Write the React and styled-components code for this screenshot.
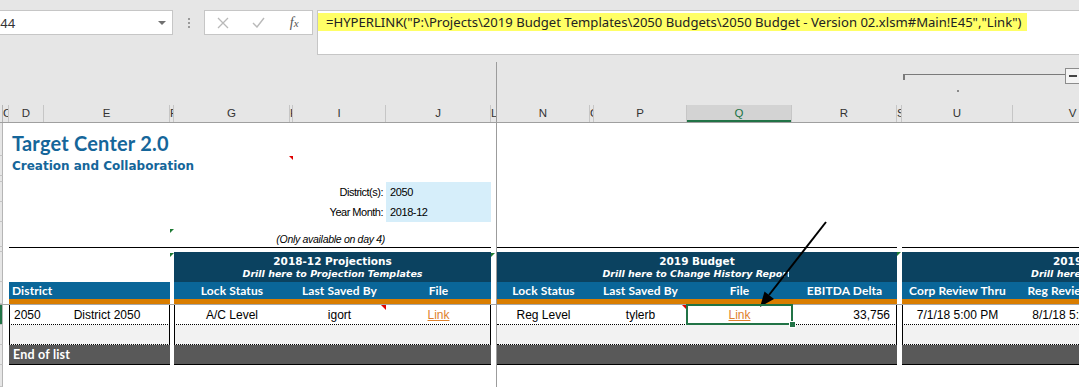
import React from "react";
import styled, { createGlobalStyle } from "styled-components";

const GlobalStyle = createGlobalStyle`
  html, body {
    margin: 0;
    padding: 0;
    background: #e6e6e6;
  }
  body {
    font-family: "Liberation Sans", Arial, sans-serif;
  }
`;

// sheet columns, widths in px (K, M and T are hidden in the workbook)
const columns = [
  { key: "C", w: 6 },
  { key: "D", w: 35 },
  { key: "E", w: 126 },
  { key: "F", w: 4 },
  { key: "G", w: 116 },
  { key: "H", w: 3 },
  { key: "I", w: 93 },
  { key: "J", w: 105 },
  { key: "L", w: 6 },
  { key: "N", w: 93 },
  { key: "O", w: 4 },
  { key: "P", w: 93 },
  { key: "Q", w: 105 },
  { key: "R", w: 105 },
  { key: "S", w: 5 },
  { key: "U", w: 111 },
  { key: "V", w: 120 },
  { key: "W", w: 120 },
];

const colAt = (key) => columns.findIndex((c) => c.key === key) + 2;
const span = (from, to) => `${colAt(from)} / ${colAt(to) + 1}`;
const track = (from, to) =>
  columns
    .slice(colAt(from) - 2, colAt(to) - 1)
    .map((c) => `${c.w}px`)
    .join(" ");

const sections = [
  {
    from: "D",
    to: "E",
    edges: "both",
    heads: [{ text: "District", span: 2, align: "left" }],
    cells: [{ text: "2050", align: "left" }, { text: "District 2050" }],
    end: "End of list",
  },
  {
    from: "G",
    to: "J",
    title: "2018-12 Projections",
    drill: "Drill here to Projection Templates",
    edges: "both",
    heads: [{ text: "Lock Status" }, {}, { text: "Last Saved By" }, { text: "File" }],
    cells: [{ text: "A/C Level" }, {}, { text: "igort", note: true }, { text: "Link", link: true }],
  },
  {
    from: "N",
    to: "R",
    title: "2019 Budget",
    drill: "Drill here to Change History Report",
    clip: 108,
    edges: "right",
    heads: [
      { text: "Lock Status" },
      {},
      { text: "Last Saved By" },
      { text: "File" },
      { text: "EBITDA Delta" },
    ],
    cells: [
      { text: "Reg Level" },
      {},
      { text: "tylerb", note: true },
      { text: "Link", link: true, selected: true },
      { text: "33,756", align: "right" },
    ],
  },
  {
    from: "U",
    to: "W",
    title: "2019 Review Dates",
    drill: "Drill here to Review Calendar",
    indent: [151, 129],
    edges: "left",
    heads: [{ text: "Corp Review Thru" }, { text: "Reg Review Thru" }, {}],
    cells: [{ text: "7/1/18 5:00 PM" }, { text: "8/1/18 5:00 PM" }, {}],
  },
];

const edgeShadow = {
  both: "inset 1px 0 0 #000, inset -1px 0 0 #000",
  left: "inset 1px 0 0 #000",
  right: "inset -1px 0 0 #000",
};

const justify = { left: "flex-start", right: "flex-end", center: "center" };

const Window = styled.div`
  position: relative;
  width: 1079px;
  height: 387px;
  overflow: hidden;
  background: #e6e6e6;
`;

const FormulaRow = styled.div`
  display: flex;
  align-items: flex-start;
  height: 55px;
  padding-top: 10px;
  box-sizing: border-box;
`;

const NameBox = styled.div`
  display: flex;
  align-items: center;
  justify-content: space-between;
  width: 185px;
  height: 25px;
  margin-left: -12px;
  padding: 0 6px 0 4px;
  box-sizing: border-box;
  background: #fff;
  border: 1px solid #c6c6c6;
  font: 13px "Noto Sans", sans-serif;
  color: #333;
`;

const Caret = styled.span`
  width: 0;
  height: 0;
  border-left: 4px solid transparent;
  border-right: 4px solid transparent;
  border-top: 4px solid #707070;
`;

const Grip = styled.div`
  display: flex;
  flex-direction: column;
  align-items: center;
  gap: 2px;
  width: 31px;
  padding-top: 8px;
`;

const GripDot = styled.span`
  width: 2px;
  height: 2px;
  background: #9a9a9a;
`;

const FxBox = styled.div`
  display: flex;
  width: 109px;
  height: 25px;
  box-sizing: border-box;
  background: #fff;
  border: 1px solid #c6c6c6;
`;

const FxButton = styled.div`
  flex: 1;
  display: flex;
  align-items: center;
  justify-content: center;
  font: italic 14px "Liberation Serif", serif;
  color: #555;
`;

const FormulaBar = styled.div`
  flex: 1;
  height: 45px;
  margin-left: 4px;
  padding-top: 2px;
  box-sizing: border-box;
  background: #fff;
  border: 1px solid #c6c6c6;
  border-right: none;
`;

const Formula = styled.span`
  display: inline-block;
  height: 18px;
  padding: 0 6px 0 8px;
  background: #ffff66;
  font: 13.1px/18px "Noto Sans", sans-serif;
  color: #222;
  white-space: nowrap;
`;

const OutlineBar = styled.div`
  display: flex;
  justify-content: flex-end;
  height: 50px;
  padding-top: 13px;
  box-sizing: border-box;
`;

const OutlineGroup = styled.div`
  display: flex;
  flex-direction: column;
  width: 176px;
`;

const OutlineTop = styled.div`
  display: flex;
  align-items: flex-start;
`;

const Bracket = styled.div`
  flex: 1;
  height: 5px;
  margin-top: 6px;
  border-top: 1px solid #7a7a7a;
  border-left: 2px solid #7a7a7a;
`;

const Collapse = styled.div`
  display: flex;
  align-items: center;
  justify-content: center;
  width: 14px;
  height: 16px;
  box-sizing: border-box;
  border: 1px solid #8c8c8c;
  border-right: none;
  background: #f4f4f4;
  &::after {
    content: "";
    width: 8px;
    height: 2px;
    background: #444;
  }
`;

const OutlineDot = styled.span`
  width: 2px;
  height: 2px;
  margin: 6px 0 0 54px;
  background: #8a8a8a;
`;

const ColumnHeaders = styled.div`
  display: flex;
  height: 18px;
  box-sizing: border-box;
  border-bottom: 1px solid #9f9f9f;
`;

const Corner = styled.div`
  flex: 0 0 3px;
  box-sizing: border-box;
  border-right: 1px solid #b5b5b5;
`;

const ColHead = styled.div`
  flex: 0 0 ${(p) => p.$w}px;
  box-sizing: border-box;
  overflow: hidden;
  border-right: 1px solid #c6c6c6;
  text-align: center;
  font: 11.5px/17px "Liberation Sans", sans-serif;
  color: ${(p) => (p.$active ? "#217346" : "#333")};
  background: ${(p) => (p.$active ? "#d3d3d3" : "transparent")};
  box-shadow: ${(p) => (p.$active ? "inset 0 -2px 0 #217346" : "none")};
`;

const Body = styled.div`
  display: grid;
  grid-template-columns: 3px ${columns.map((c) => `${c.w}px`).join(" ")};
  grid-template-rows: 33px 20px 6px 20px 20px 25px 5px 30px 22px 1px 20px 20px 20px 1fr;
  height: 264px;
  background: #fff;
`;

const RowHead = styled.div`
  grid-column: 1;
  grid-row: ${(p) => p.$row};
  box-sizing: border-box;
  background: ${(p) => (p.$active ? "#217346" : "#e6e6e6")};
  border-bottom: 1px solid #c4c4c4;
  border-right: 1px solid #b5b5b5;
`;

const Title = styled.div`
  grid-column: ${span("D", "I")};
  grid-row: 1;
  align-self: end;
  padding: 0 0 3px 3px;
  font: 700 20px/20px Lato, sans-serif;
  letter-spacing: 0.2px;
  color: #15669a;
  white-space: nowrap;
`;

const Subtitle = styled.div`
  grid-column: ${span("D", "I")};
  grid-row: 2;
  padding: 3px 0 0 3px;
  font: 700 12px/14px "DejaVu Sans", sans-serif;
  color: #15669a;
  white-space: nowrap;
`;

const Label = styled.div`
  grid-column: ${span("G", "I")};
  grid-row: ${(p) => p.$row};
  display: flex;
  align-items: center;
  justify-content: flex-end;
  padding-right: 3px;
  font: 11px "Liberation Sans", sans-serif;
  letter-spacing: -0.5px;
  color: #000;
`;

const InputBox = styled.div`
  grid-column: ${span("J", "J")};
  grid-row: 4 / 6;
  display: grid;
  grid-template-rows: 20px 20px;
  background: #d6eefa;
`;

const InputValue = styled.div`
  display: flex;
  align-items: center;
  padding-left: 4px;
  font: 11px "Liberation Sans", sans-serif;
  letter-spacing: -0.4px;
  color: #000;
`;

const Note = styled.div`
  grid-column: ${span("G", "I")};
  grid-row: 6;
  align-self: end;
  padding: 0 1px 2px 0;
  text-align: right;
  font: italic 10.5px "Liberation Sans", sans-serif;
  letter-spacing: -0.3px;
  color: #000;
  white-space: nowrap;
`;

const Rule = styled.div`
  grid-column: ${(p) => p.$col};
  grid-row: 7;
  border-top: 1px solid #000;
`;

const Mark = styled.div`
  grid-column: ${(p) => p.$col};
  grid-row: ${(p) => p.$row};
  justify-self: ${(p) => (p.$red ? "end" : "start")};
  align-self: start;
  width: 0;
  height: 0;
  margin-top: ${(p) => p.$top || 0}px;
  border-top: 4px solid ${(p) => (p.$red ? "#e00000" : "#1e7b34")};
  ${(p) =>
    p.$red
      ? "border-left: 4px solid transparent;"
      : "border-right: 4px solid transparent;"}
`;

const NavyBand = styled.div`
  grid-column: ${(p) => p.$col};
  grid-row: 8;
  display: flex;
  flex-direction: column;
  padding-top: 3px;
  overflow: hidden;
  background: #0b4260;
  color: #fff;
  white-space: nowrap;
`;

const BandTitle = styled.div`
  font: 700 10.5px/13px "DejaVu Sans", sans-serif;
  text-align: ${(p) => (p.$indent ? "left" : "center")};
  padding-left: ${(p) => p.$indent || 0}px;
`;

const BandDrill = styled.div`
  font: italic 700 9.5px/12px "DejaVu Sans", sans-serif;
  text-align: ${(p) => (p.$indent ? "left" : "center")};
  padding-left: ${(p) => p.$indent || 0}px;
  clip-path: inset(0 ${(p) => p.$clip || 0}px 0 0);
`;

const HeadBand = styled.div`
  grid-column: ${(p) => p.$col};
  grid-row: 9;
  display: grid;
  grid-template-columns: ${(p) => p.$cols};
  background: #0a6699;
  border-bottom: 5px solid #d97d00;
`;

const HeadCell = styled.div`
  grid-column: span ${(p) => p.$span || 1};
  display: flex;
  align-items: center;
  justify-content: ${(p) => justify[p.$align || "center"]};
  padding-left: ${(p) => (p.$align === "left" ? 3 : 0)}px;
  font: 700 12px Lato, sans-serif;
  letter-spacing: 0.1px;
  color: #fff;
  white-space: nowrap;
`;

const FreezeRow = styled.div`
  grid-column: 1 / -1;
  grid-row: 10;
  background: #a6a6a6;
`;

const DataRow = styled.div`
  grid-column: ${(p) => p.$col};
  grid-row: ${(p) => p.$row};
  display: grid;
  grid-template-columns: ${(p) => p.$cols};
  background: ${(p) => (p.$shade ? "#f2f2f2" : "#fff")};
  border-bottom: 1px dotted #000;
  box-shadow: ${(p) => edgeShadow[p.$edges]};
`;

const DataCell = styled.div`
  position: relative;
  display: flex;
  align-items: center;
  justify-content: ${(p) => justify[p.$align || "center"]};
  padding: 0 ${(p) => (p.$align === "right" ? 7 : 0)}px 0
    ${(p) => (p.$align === "left" ? 5 : 0)}px;
  font: 12px "Liberation Sans", sans-serif;
  color: #000;
  white-space: nowrap;
  ${(p) =>
    p.$note &&
    `
    &::after {
      content: "";
      position: absolute;
      top: 0;
      right: 0;
      border-top: 5px solid #e00000;
      border-left: 5px solid transparent;
    }
  `}
  ${(p) =>
    p.$selected &&
    `
    z-index: 1;
    box-shadow: 0 0 0 1px #217346, inset 0 0 0 1px #217346;
    &::before {
      content: "";
      position: absolute;
      right: -4px;
      bottom: -4px;
      width: 5px;
      height: 5px;
      background: #217346;
      border: 1px solid #fff;
    }
  `}
`;

const LinkText = styled.span`
  color: #de812c;
  text-decoration: underline;
`;

const EndBand = styled.div`
  grid-column: ${(p) => p.$col};
  grid-row: 13;
  display: flex;
  align-items: center;
  padding-left: 4px;
  background: #595959;
  border-bottom: 1px solid #000;
  font: 700 12.5px Lato, sans-serif;
  letter-spacing: 0.2px;
  color: #fff;
`;

const FreezeLine = styled.div`
  position: absolute;
  left: 496px;
  top: 62px;
  bottom: 0;
  width: 1px;
  background: #9c9c9c;
`;

const Overlay = styled.svg`
  position: absolute;
  left: 0;
  top: 0;
  pointer-events: none;
`;

const formula =
  '=HYPERLINK("P:\\Projects\\2019 Budget Templates\\2050 Budgets\\2050 Budget - Version 02.xlsm#Main!E45","Link")';

function App() {
  return (
    <Window>
      <GlobalStyle />
      <FormulaRow>
        <NameBox>
          <span>E44</span>
          <Caret />
        </NameBox>
        <Grip>
          <GripDot />
          <GripDot />
          <GripDot />
        </Grip>
        <FxBox>
          <FxButton>
            <svg width="12" height="12" viewBox="0 0 12 12">
              <path d="M1 1L11 11M11 1L1 11" stroke="#b9b9b9" strokeWidth="1.3" fill="none" />
            </svg>
          </FxButton>
          <FxButton>
            <svg width="13" height="11" viewBox="0 0 13 11">
              <path d="M1 6l4 4L12 1" stroke="#b9b9b9" strokeWidth="1.4" fill="none" />
            </svg>
          </FxButton>
          <FxButton>
            f<span style={{ fontSize: 11 }}>x</span>
          </FxButton>
        </FxBox>
        <FormulaBar>
          <Formula>{formula}</Formula>
        </FormulaBar>
      </FormulaRow>

      <OutlineBar>
        <OutlineGroup>
          <OutlineTop>
            <Bracket />
            <Collapse />
          </OutlineTop>
          <OutlineDot />
        </OutlineGroup>
      </OutlineBar>

      <ColumnHeaders>
        <Corner />
        {columns.map((c) => (
          <ColHead key={c.key} $w={c.w} $active={c.key === "Q"}>
            {c.key}
          </ColHead>
        ))}
      </ColumnHeaders>

      <Body>
        {[1, 2, 3, 4, 5, 6, 7, 8, 9, 11, 12, 13, 14].map((r) => (
          <RowHead key={r} $row={r} $active={r === 11} />
        ))}

        <Title>Target Center 2.0</Title>
        <Subtitle>Creation and Collaboration</Subtitle>
        <Mark $red $col={span("H", "H")} $row={2} />

        <Label $row={4}>District(s):</Label>
        <Label $row={5}>Year Month:</Label>
        <InputBox>
          <InputValue>2050</InputValue>
          <InputValue>2018-12</InputValue>
        </InputBox>
        <Note>(Only available on day 4)</Note>
        <Mark $col={span("F", "F")} $row={6} $top={7} />

        <Rule $col={span("D", "J")} />
        <Rule $col={span("N", "R")} />
        <Rule $col={span("U", "W")} />

        <Mark $col={span("F", "F")} $row={8} $top={1} />
        <Mark $col={span("L", "L")} $row={8} $top={1} />
        <Mark $col={span("S", "S")} $row={8} />

        {sections.map((s) => {
          const col = span(s.from, s.to);
          const cols = track(s.from, s.to);
          return (
            <React.Fragment key={s.from}>
              {s.title && (
                <NavyBand $col={col}>
                  <BandTitle $indent={s.indent && s.indent[0]}>{s.title}</BandTitle>
                  <BandDrill $indent={s.indent && s.indent[1]} $clip={s.clip}>
                    {s.drill}
                  </BandDrill>
                </NavyBand>
              )}
              <HeadBand $col={col} $cols={cols}>
                {s.heads.map((h, i) => (
                  <HeadCell key={i} $span={h.span} $align={h.align}>
                    {h.text}
                  </HeadCell>
                ))}
              </HeadBand>
              <DataRow $col={col} $cols={cols} $row={11} $edges={s.edges}>
                {s.cells.map((c, i) => (
                  <DataCell key={i} $align={c.align} $note={c.note} $selected={c.selected}>
                    {c.link ? <LinkText>{c.text}</LinkText> : c.text}
                  </DataCell>
                ))}
              </DataRow>
              <DataRow $col={col} $cols={cols} $row={12} $edges={s.edges} $shade />
              <EndBand $col={col}>{s.end}</EndBand>
            </React.Fragment>
          );
        })}

        <FreezeRow />
      </Body>

      <FreezeLine />

      <Overlay width="1079" height="387">
        <line x1="826" y1="222" x2="769" y2="295" stroke="#000" strokeWidth="2" />
        <polygon points="760,307 774,299 764.5,291.5" fill="#000" />
      </Overlay>
    </Window>
  );
}

export default App;
